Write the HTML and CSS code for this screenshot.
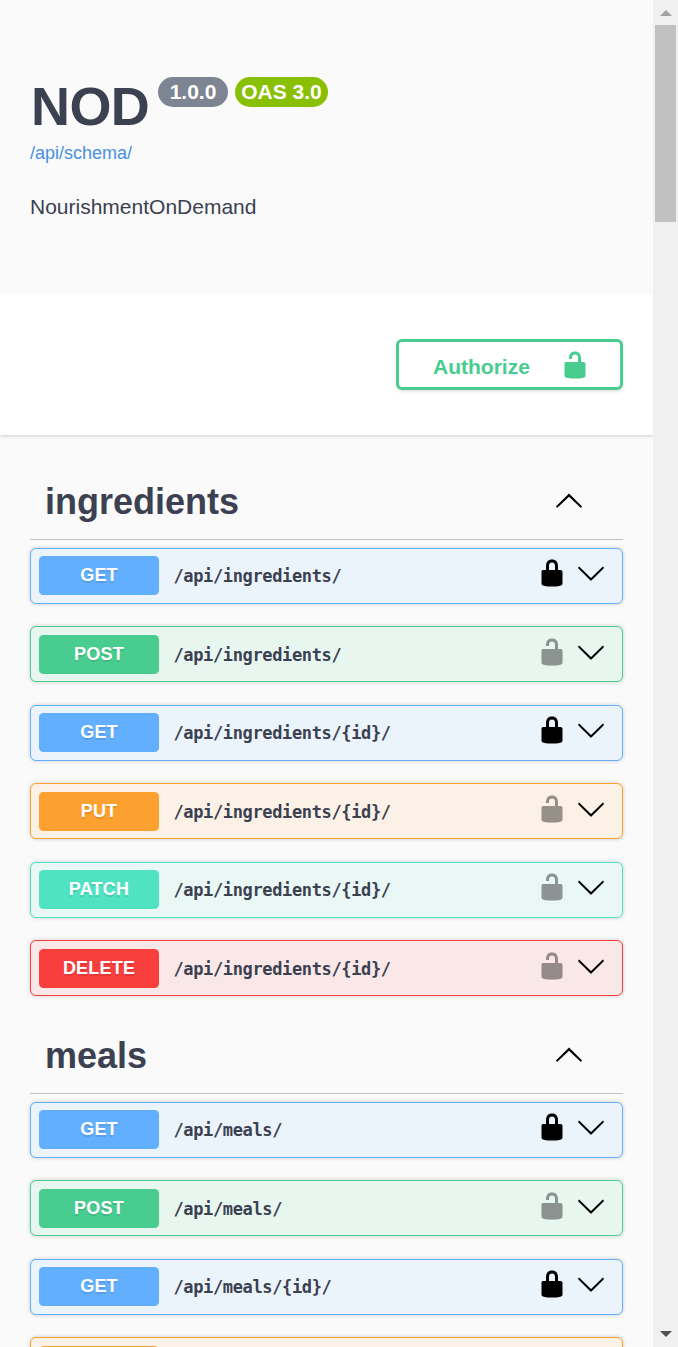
FILE: index.html
```html
<!DOCTYPE html>
<html lang="en">
<head>
<meta charset="utf-8">
<title>NOD</title>
<link rel="stylesheet" href="styles.css">
</head>
<body>
<svg class="sprite" aria-hidden="true">
  <symbol id="locked" viewBox="0 0 20 20"><path d="M15.8 8H14V5.6C14 2.703 12.665 1 10 1 7.334 1 6 2.703 6 5.6V8H4c-.553 0-1 .646-1 1.199V17c0 .549.428 1.139.951 1.307l1.197.387C5.672 18.861 6.55 19 7.1 19h5.8c.549 0 1.428-.139 1.951-.307l1.196-.387c.524-.167.953-.757.953-1.306V9.199C17 8.646 16.352 8 15.8 8zM12 8H8V5.199C8 3.754 8.797 3 10 3c1.203 0 2 .754 2 2.199V8z"/></symbol>
  <symbol id="unlocked" viewBox="0 0 20 20"><path d="M15.8 8H14V5.6C14 2.703 12.665 1 10 1 7.334 1 6 2.703 6 5.6V6h2v-.801C8 3.754 8.797 3 10 3c1.203 0 2 .754 2 2.199V8H4c-.553 0-1 .646-1 1.199V17c0 .549.428 1.139.951 1.307l1.197.387C5.672 18.861 6.55 19 7.1 19h5.8c.549 0 1.428-.139 1.951-.307l1.196-.387c.524-.167.953-.757.953-1.306V9.199C17 8.646 16.352 8 15.8 8z"/></symbol>
  <symbol id="down" viewBox="0 0 20 20"><path d="M17.418 6.109c.272-.268.709-.268.979 0s.271.701 0 .969l-7.908 7.83c-.27.268-.707.268-.979 0l-7.908-7.83c-.27-.268-.27-.701 0-.969.271-.268.709-.268.979 0L10 13.25l7.418-7.141z"/></symbol>
  <symbol id="up" viewBox="0 0 20 20"><path d="M17.418 14.908c.272.268.709.268.979 0s.271-.701 0-.969l-7.908-7.83c-.27-.268-.707-.268-.979 0l-7.908 7.83c-.27.268-.27.701 0 .969.271.268.709.268.979 0L10 7.767l7.418 7.141z"/></symbol>
</svg>
<div class="window">
  <main class="page">
    <header class="info">
      <div class="title-row">
        <h1 class="title">NOD</h1>
        <span class="badge version">1.0.0</span>
        <span class="badge oas">OAS 3.0</span>
      </div>
      <a class="schema-link">/api/schema/</a>
      <p class="description">NourishmentOnDemand</p>
    </header>
    <div class="auth-bar">
      <button class="authorize"><span>Authorize</span><svg class="icon"><use href="#unlocked"/></svg></button>
    </div>
    <div class="sections">
      <section>
        <h2 class="tag"><span>ingredients</span><svg class="icon"><use href="#up"/></svg></h2>
        <div class="op get"><span class="method">GET</span><span class="path">/api/ingredients/</span><svg class="icon lock"><use href="#locked"/></svg><svg class="icon"><use href="#down"/></svg></div>
        <div class="op post"><span class="method">POST</span><span class="path">/api/ingredients/</span><svg class="icon lock open"><use href="#unlocked"/></svg><svg class="icon"><use href="#down"/></svg></div>
        <div class="op get"><span class="method">GET</span><span class="path">/api/ingredients/{id}/</span><svg class="icon lock"><use href="#locked"/></svg><svg class="icon"><use href="#down"/></svg></div>
        <div class="op put"><span class="method">PUT</span><span class="path">/api/ingredients/{id}/</span><svg class="icon lock open"><use href="#unlocked"/></svg><svg class="icon"><use href="#down"/></svg></div>
        <div class="op patch"><span class="method">PATCH</span><span class="path">/api/ingredients/{id}/</span><svg class="icon lock open"><use href="#unlocked"/></svg><svg class="icon"><use href="#down"/></svg></div>
        <div class="op delete"><span class="method">DELETE</span><span class="path">/api/ingredients/{id}/</span><svg class="icon lock open"><use href="#unlocked"/></svg><svg class="icon"><use href="#down"/></svg></div>
      </section>
      <section>
        <h2 class="tag"><span>meals</span><svg class="icon"><use href="#up"/></svg></h2>
        <div class="op get"><span class="method">GET</span><span class="path">/api/meals/</span><svg class="icon lock"><use href="#locked"/></svg><svg class="icon"><use href="#down"/></svg></div>
        <div class="op post"><span class="method">POST</span><span class="path">/api/meals/</span><svg class="icon lock open"><use href="#unlocked"/></svg><svg class="icon"><use href="#down"/></svg></div>
        <div class="op get"><span class="method">GET</span><span class="path">/api/meals/{id}/</span><svg class="icon lock"><use href="#locked"/></svg><svg class="icon"><use href="#down"/></svg></div>
        <div class="op put"><span class="method"></span></div>
      </section>
    </div>
  </main>
  <aside class="scrollbar">
    <svg class="arrow arrow-up" viewBox="0 0 12 6"><path d="M6 0l6 6H0z"/></svg>
    <div class="thumb"></div>
    <svg class="arrow arrow-down" viewBox="0 0 12 6"><path d="M0 0h12L6 6z"/></svg>
  </aside>
</div>
</body>
</html>
```
FILE: styles.css
```css
* { box-sizing: border-box; }
html, body { margin: 0; height: 1347px; overflow: hidden; }
body {
  background: #fafafa;
  color: #3b4151;
  font-family: "Liberation Sans", Arial, sans-serif;
}
.sprite { display: none; }
.window { display: flex; height: 1347px; overflow: hidden; }
.page { width: 653px; overflow: hidden; }
.icon { width: 30px; height: 30px; flex: none; fill: currentColor; }

.info { height: 294px; padding: 75px 30px 0; }
.title-row { display: flex; align-items: flex-start; height: 66px; }
.title {
  width: 128px;
  margin: 0;
  padding-left: 1px;
  font-size: 54px;
  letter-spacing: -.6px;
  line-height: 62px;
}
.badge {
  height: 30px;
  margin-top: 2px;
  border-radius: 15px;
  color: #fff;
  font-size: 21px;
  font-weight: 700;
  line-height: 30px;
  text-align: center;
}
.version { width: 70px; background: #7d8492; }
.oas { width: 93px; margin-left: 7px; background: #89bf04; }
.schema-link { display: block; color: #4990e2; font-size: 18px; line-height: 24px; }
.description { margin: 30px 0 0; font-size: 21px; line-height: 24px; }

.auth-bar {
  display: flex;
  justify-content: flex-end;
  height: 141px;
  padding: 45px 30px;
  background: #fff;
  box-shadow: 0 1.5px 3px rgba(0, 0, 0, .15);
}
.authorize {
  display: flex;
  width: 227px;
  height: 51px;
  padding: 8px 30px 0 34px;
  justify-content: space-between;
  border: 3px solid #49cc90;
  border-radius: 6px;
  background: transparent;
  box-shadow: 0 1.5px 3px rgba(0, 0, 0, .1);
  color: #49cc90;
  font: 700 21px/34px "Liberation Sans", Arial, sans-serif;
}

.sections { padding: 29.9px 30px 0; }
.tag {
  display: flex;
  justify-content: space-between;
  align-items: flex-start;
  height: 75px;
  margin: 0 0 8px;
  padding: 16px 39px 0 15px;
  border-bottom: 1px solid rgba(59, 65, 81, .3);
  font-size: 36px;
  line-height: 42px;
}
.tag .icon { margin-top: 4px; color: #000; }
.op {
  display: flex;
  height: 56px;
  margin-bottom: 22.5px;
  padding: 7.35px 16px 0 8px;
  border: 1px solid;
  border-radius: 6px;
  box-shadow: 0 0 4.5px rgba(0, 0, 0, .19);
}
.method {
  width: 120px;
  height: 39px;
  border-radius: 4.5px;
  color: #fff;
  font-size: 18px;
  font-weight: 700;
  letter-spacing: .2px;
  line-height: 38px;
  text-align: center;
  text-shadow: 0 1.5px 0 rgba(0, 0, 0, .1);
}
.path {
  flex: 1;
  padding-left: 14.5px;
  font: 700 17px/40px "DejaVu Sans Mono", monospace;
  letter-spacing: -.36px;
}
.op .icon { margin-top: 1.3px; color: #000; }
.op.post .icon, .op.put .icon, .op.delete .icon { margin-top: 1.9px; }
.op .lock { margin-right: 9px; }
.op .open { opacity: .4; }
.get { border-color: #61affe; background: #ebf3fb; }
.get .method { background: #61affe; }
.post { border-color: #49cc90; background: #e8f6f0; }
.post .method { background: #49cc90; }
.put { border-color: #fca130; background: #fbf1e6; }
.put .method { background: #fca130; }
.patch { border-color: #50e3c2; background: #e9f8f5; }
.patch .method { background: #50e3c2; }
.delete { border-color: #f93e3e; background: #fae7e7; }
.delete .method { background: #f93e3e; }

.scrollbar {
  display: flex;
  flex-direction: column;
  align-items: center;
  width: 25px;
  padding: 10px 0;
  background: #f0f0f0;
}
.arrow { width: 12px; height: 6px; }
.arrow-up { fill: #a3a3a3; }
.arrow-down { margin-top: auto; fill: #505050; }
.thumb { width: 21px; height: 197px; margin-top: 9px; background: #c1c1c1; }
```
